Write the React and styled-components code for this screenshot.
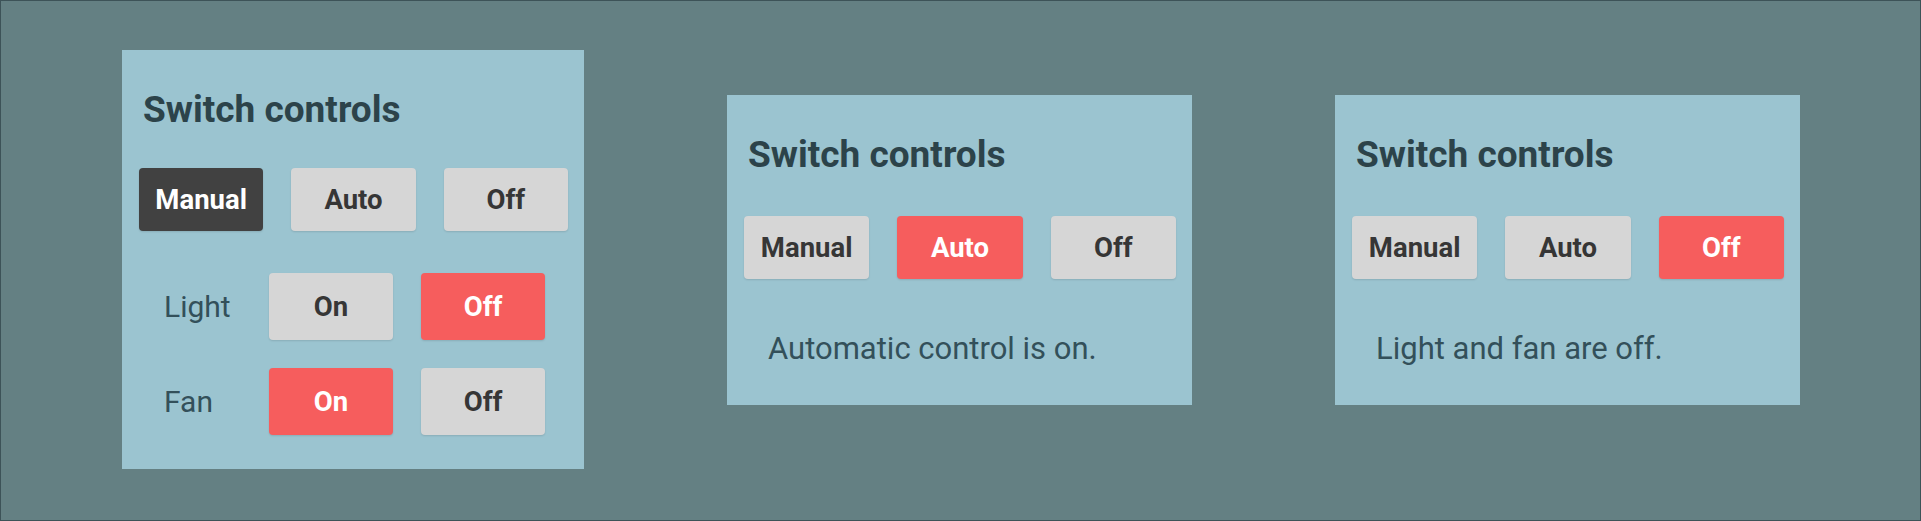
import React from 'react';
import styled, { createGlobalStyle, css } from 'styled-components';

const GlobalStyle = createGlobalStyle`
  html, body {
    margin: 0;
    padding: 0;
    background: #648083;
  }
  * {
    box-sizing: border-box;
  }
`;

// Layout

const Page = styled.div`
  width: 100vw;
  height: 100vh;
  border: 1px solid #3d5358;
  display: flex;
  align-items: flex-start;
  justify-content: space-between;
  padding: 49px 120px 0 121px;
  font-family: Roboto, 'Liberation Sans', sans-serif;
`;

const Panel = styled.section`
  width: ${(p) => (p.$compact ? '465px' : '462px')};
  margin-top: ${(p) => (p.$compact ? '45px' : '0')};
  background: #9bc4d0;
  padding: 42px 16px ${(p) => (p.$compact ? '41px' : '34px')} 17px;
  display: flex;
  flex-direction: column;
`;

const Title = styled.h2`
  margin: 0 0 ${(p) => (p.$compact ? '43px' : '40px')} 4px;
  font-size: 37px;
  line-height: 36px;
  font-weight: 700;
  color: #2c434a;
`;

const ButtonRow = styled.div`
  display: flex;
  gap: 28px;
`;

const DeviceRow = styled.div`
  display: flex;
  align-items: center;
  gap: 28px;
  padding-left: 25px;
  margin-top: ${(p) => p.$top}px;
`;

const Label = styled.span`
  width: 77px;
  font-size: 30px;
  color: #33505a;
`;

const variants = {
  idle: css`
    background: #d6d6d6;
    color: #363636;
  `,
  dark: css`
    background: #414141;
    color: #ffffff;
  `,
  red: css`
    background: #f65d5d;
    color: #ffffff;
  `,
};

const SwitchButton = styled.button`
  flex: ${(p) => (p.$fixed ? '0 0 124px' : '1 1 0')};
  height: ${(p) => (p.$tall ? '67px' : '63px')};
  border: none;
  border-radius: 4px;
  font-family: Roboto, 'Liberation Sans', sans-serif;
  font-size: 27.5px;
  font-weight: 700;
  box-shadow: 0 1px 2px rgba(0, 0, 0, 0.12);
  cursor: pointer;
  ${(p) => variants[p.$variant || 'idle']}
`;

const Status = styled.p`
  margin: 55px 0 0 24px;
  font-size: 31px;
  line-height: 30px;
  color: #33505a;
`;

const modes = ['Manual', 'Auto', 'Off'];

const ModeButtons = ({ active, activeVariant }) => (
  <ButtonRow>
    {modes.map((m) => (
      <SwitchButton key={m} $variant={m === active ? activeVariant : 'idle'}>
        {m}
      </SwitchButton>
    ))}
  </ButtonRow>
);

const Device = ({ name, on, top }) => (
  <DeviceRow $top={top}>
    <Label>{name}</Label>
    <SwitchButton $fixed $tall $variant={on ? 'red' : 'idle'}>On</SwitchButton>
    <SwitchButton $fixed $tall $variant={on ? 'idle' : 'red'}>Off</SwitchButton>
  </DeviceRow>
);

const App = () => (
  <>
    <GlobalStyle />
    <Page>
      <Panel>
        <Title>Switch controls</Title>
        <ModeButtons active="Manual" activeVariant="dark" />
        <Device name="Light" on={false} top={42} />
        <Device name="Fan" on top={28} />
      </Panel>

      <Panel $compact>
        <Title $compact>Switch controls</Title>
        <ModeButtons active="Auto" activeVariant="red" />
        <Status>Automatic control is on.</Status>
      </Panel>

      <Panel $compact>
        <Title $compact>Switch controls</Title>
        <ModeButtons active="Off" activeVariant="red" />
        <Status>Light and fan are off.</Status>
      </Panel>
    </Page>
  </>
);

export default App;
